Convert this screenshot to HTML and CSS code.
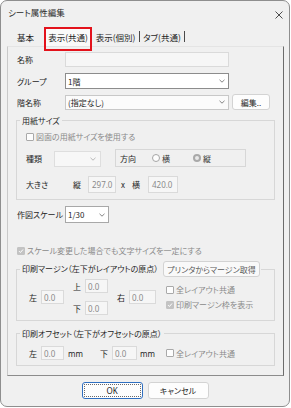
FILE: index.html
```html
<!DOCTYPE html>
<html lang="ja">
<head>
<meta charset="utf-8">
<title>シート属性編集</title>
<link rel="stylesheet" href="styles.css">
</head>
<body>
<div class="dialog">
  <div class="titlebar">
    <span class="title">シート属性編集</span>
    <svg class="close" width="8" height="8" viewBox="0 0 8 8"><path d="M0.5 0.5L7.5 7.5M7.5 0.5L0.5 7.5" stroke="#3a3a3a" stroke-width="0.9" fill="none"/></svg>
  </div>
  <div class="tabs">
    <div class="tab t1">基本</div>
    <div class="tab t2 active">表示(共通)</div>
    <div class="tab t3">表示(個別)</div><span class="tsep"></span>
    <div class="tab t4">タブ(共通)</div><span class="tsep"></span>
  </div>
  <div class="panel">
    <div class="row r1"><span class="lbl">名称</span><span class="field name"></span></div>
    <div class="row r2"><span class="lbl">グループ</span><span class="select grp"><span>1階</span><svg class="chev" width="6" height="4" viewBox="0 0 6 4"><path d="M0.5 0.8L3 3.2L5.5 0.8" stroke="#777" fill="none" stroke-width="0.9"/></svg></span></div>
    <div class="row r3"><span class="lbl">階名称</span><span class="select floor"><span>(指定なし)</span><svg class="chev" width="6" height="4" viewBox="0 0 6 4"><path d="M0.5 0.8L3 3.2L5.5 0.8" stroke="#777" fill="none" stroke-width="0.9"/></svg></span><span class="btn edit">編集..</span></div>

    <fieldset class="fs paper">
      <legend>用紙サイズ</legend>
      <div class="chk-row p1"><span class="cb"></span><span class="dis">図面の用紙サイズを使用する</span></div>
      <div class="kind-row">
        <span class="lbl2">種類</span>
        <span class="select kind"><span></span><svg class="chev" width="6" height="4" viewBox="0 0 6 4"><path d="M0.5 0.8L3 3.2L5.5 0.8" stroke="#b0b0b0" fill="none" stroke-width="0.9"/></svg></span>
        <div class="dir">
          <span class="dirlbl">方向</span>
          <span class="opt o1"><span class="rb"></span>横</span>
          <span class="opt"><span class="rb on"></span>縦</span>
        </div>
      </div>
      <div class="size-row">
        <span class="lbl3">大きさ</span>
        <span class="u">縦</span><span class="field num w28">297.0</span>
        <span class="x">x</span>
        <span class="u u2">横</span><span class="field num w30">420.0</span>
      </div>
    </fieldset>

    <div class="row scale"><span class="lbl">作図スケール</span><span class="select sc"><span>1/30</span><svg class="chev" width="6" height="4" viewBox="0 0 6 4"><path d="M0.5 0.8L3 3.2L5.5 0.8" stroke="#777" fill="none" stroke-width="0.9"/></svg></span></div>

    <div class="chk-row keep"><span class="cb on"><svg width="6" height="6" viewBox="0 0 6 6"><path d="M1 3.1L2.4 4.5L5 1.5" stroke="#fff" fill="none" stroke-width="1"/></svg></span><span class="dis">スケール変更した場合でも文字サイズを一定にする</span></div>

    <fieldset class="fs margin">
      <legend><span class="lg">印刷マージン（左下がレイアウトの原点）</span><span class="btn printer">プリンタからマージン取得</span></legend>
      <div class="mg">
        <div class="cell ca"><span class="ml">左</span><span class="field num w23">0.0</span></div>
        <div class="stack">
          <div class="cell"><span class="ml">上</span><span class="field num w23">0.0</span></div>
          <div class="cell"><span class="ml">下</span><span class="field num w23">0.0</span></div>
        </div>
        <div class="cell cc"><span class="ml">右</span><span class="field num w27">0.0</span></div>
        <div class="checks">
          <div class="chk-row"><span class="cb"></span><span class="dis">全レイアウト共通</span></div>
          <div class="chk-row"><span class="cb on"><svg width="6" height="6" viewBox="0 0 6 6"><path d="M1 3.1L2.4 4.5L5 1.5" stroke="#fff" fill="none" stroke-width="1"/></svg></span><span class="dis">印刷マージン枠を表示</span></div>
        </div>
      </div>
    </fieldset>

    <fieldset class="fs offset">
      <legend>印刷オフセット（左下がオフセットの原点）</legend>
      <div class="off">
        <span class="ml">左</span><span class="field num w23">0.0</span><span class="mm">mm</span>
        <span class="ml">下</span><span class="field num w25">0.0</span><span class="mm mm2">mm</span>
        <span class="cb"></span><span class="dis">全レイアウト共通</span>
      </div>
    </fieldset>
  </div>
  <div class="footer">
    <span class="btn ok"><span class="focus">OK</span></span>
    <span class="btn cancel">キャンセル</span>
  </div>
</div>
</body>
</html>
```
FILE: styles.css
```css
* { box-sizing: border-box; }
html, body { margin: 0; padding: 0; background: #ffffff; }
body {
  font-family: "Noto Sans CJK JP", "Noto Sans", sans-serif;
  font-size: 8px;
  line-height: 11px;
  color: #1e1e1e;
  font-feature-settings: "palt" 1;
  white-space: nowrap;
}
.dialog {
  width: 290px;
  height: 407px;
  border: 1px solid #8e8e8e;
  border-radius: 7px;
  background: #f0f0f0;
  display: flex;
  flex-direction: column;
  overflow: hidden;
}
.titlebar {
  height: 26px;
  flex: none;
  display: flex;
  align-items: center;
  justify-content: space-between;
  padding: 0 6px 3px 7px;
}
.title { color: #2a2a2a; font-size: 8.5px; }
.close { margin-top: 4px; }

.tabs {
  height: 19px;
  flex: none;
  display: flex;
  align-items: center;
  margin-left: 6px;
}
.tab {
  height: 19px;
  display: flex;
  align-items: center;
  justify-content: center;
  padding-top: 1px;
  font-size: 8.5px;
}
.t1 { width: 37px; }
.t2 { width: 48px; }
.t3 { width: 47px; }
.t4 { width: 44px; }
.tsep { width: 1px; height: 11px; background: #4a4a4a; }
.active {
  position: relative;
  background: #fafafa;
}
.active::after {
  content: "";
  position: absolute;
  left: 0;
  right: 0;
  top: 0;
  bottom: -5px;
  border: 2px solid #e3121b;
}

.panel {
  flex: none;
  margin-left: 6px;
  width: 277px;
  height: 330px;
  border: 1px solid;
  border-color: #e4e4e4 #6c6c6c #8c8c8c #c9c9c9;
  padding: 5px 8px 0 8px;
}

.row { display: flex; align-items: center; }
.lbl { width: 49px; padding-left: 1px; flex: none; }
.r1 { height: 15px; }
.r2 { height: 16px; margin-top: 6px; }
.r3 { height: 16px; margin-top: 5px; }

.field {
  display: flex;
  align-items: center;
  height: 15px;
  border: 1px solid #dadada;
  background: #f6f6f6;
  flex: none;
}
.name { width: 164px; }
.num { color: #8a8a8a; padding-left: 2px; font-family: "Noto Sans", sans-serif; }
.w23 { width: 23px; height: 14px; }
.w25 { width: 25px; height: 14px; }
.w27 { width: 27px; height: 14px; }
.w28 { width: 28px; height: 17px; padding-left: 3px; }
.w30 { width: 30px; height: 17px; padding-left: 3px; }

.select {
  display: flex;
  align-items: center;
  justify-content: space-between;
  height: 15px;
  border: 1px solid #c8c8c8;
  background: #fbfbfb;
  padding: 0 3px 0 2px;
  flex: none;
}
.grp { width: 164px; height: 16px; background: #ffffff; border-color: #8c8c8c; }
.floor { width: 164px; }
.sc { width: 44px; height: 17px; background: #ffffff; border-color: #a8a8a8; }
.kind { width: 47px; height: 16px; background: #f7f7f7; border-color: #dedede; padding-right: 4px; }

.btn {
  display: flex;
  align-items: center;
  justify-content: center;
  border: 1px solid #d3d3d3;
  border-radius: 3px;
  background: #fdfdfd;
  flex: none;
}
.edit { width: 38px; height: 16px; margin-left: 3px; }

.fs {
  margin: 0;
  padding: 0;
  min-width: 0;
  width: 259px;
  border: 1px solid #d7d7d7;
}
.fs legend {
  margin-left: 3px;
  padding: 0 2px;
  line-height: 11px;
}
.paper { margin-top: 5px; padding-top: 5px; padding-bottom: 6px; }

.chk-row { display: flex; align-items: center; height: 11px; }
.p1 { padding-left: 9px; }
.cb {
  width: 8px;
  height: 8px;
  border: 1px solid #a9a9a9;
  border-radius: 1px;
  background: #fdfdfd;
  flex: none;
  margin-right: 2px;
  display: flex;
  align-items: center;
  justify-content: center;
}
.cb.on { background: #c3c3c3; border-color: #c3c3c3; }
.dis { color: #8a8a8a; }

.kind-row {
  display: flex;
  align-items: flex-end;
  height: 18px;
  margin-top: 7px;
  padding-left: 9px;
}
.lbl2 { width: 28px; align-self: center; }
.dir {
  margin-left: 14px;
  width: 131px;
  height: 18px;
  border: 1px solid #d7d7d7;
  display: flex;
  align-items: center;
  padding-left: 4px;
}
.dirlbl { width: 32px; }
.opt { display: flex; align-items: center; color: #333; }
.o1 { width: 41px; }
.rb {
  width: 8px;
  height: 8px;
  border-radius: 50%;
  border: 1px solid #a5a5a5;
  background: #fdfdfd;
  margin-right: 2px;
}
.rb.on {
  border: 2px solid #a9a9a9;
  background: #e9e9e9;
}

.size-row {
  display: flex;
  align-items: center;
  height: 17px;
  margin-top: 9px;
  padding-left: 9px;
}
.lbl3 { width: 47px; }
.u { width: 15px; }
.x { width: 11px; margin-left: 5px; }
.u2 { width: 16px; }

.scale { height: 17px; margin-top: 6px; }
.keep { margin-top: 22px; padding-left: 1px; }

.margin { margin-top: 5px; padding-top: 2px; padding-bottom: 5px; }
.margin legend { display: flex; align-items: center; padding-right: 1px; }
.lg { line-height: 16px; width: 138px; }
.printer { width: 97px; height: 16px; margin-left: 3px; color: #5c5c5c; background: #f9f9f9; }

.mg { display: flex; align-items: center; padding-left: 12px; }
.cell { display: flex; align-items: center; }
.ml { width: 12px; flex: none; }
.stack { display: flex; flex-direction: column; gap: 8px; margin-left: 9px; }
.cc { margin-left: 9px; }
.checks { display: flex; flex-direction: column; gap: 4px; margin-left: 10px; }

.offset { margin-top: 7px; padding-top: 7px; padding-bottom: 5px; }
.off { display: flex; align-items: center; height: 14px; padding-left: 12px; }
.mm { width: 32px; margin-left: 4px; font-family: "Noto Sans", sans-serif; }
.mm2 { width: 26px; margin-left: 3px; }

.footer {
  flex: none;
  display: flex;
  justify-content: center;
  gap: 5px;
  margin-top: 6px;
}
.footer .btn { width: 61px; height: 17px; }
.ok { border-color: #2f6fc0; padding: 1px; font-family: "Noto Sans", sans-serif; }
.ok .focus {
  width: 100%;
  height: 100%;
  border: 1px dotted #6b6b6b;
  display: flex;
  align-items: center;
  justify-content: center;
}
```
